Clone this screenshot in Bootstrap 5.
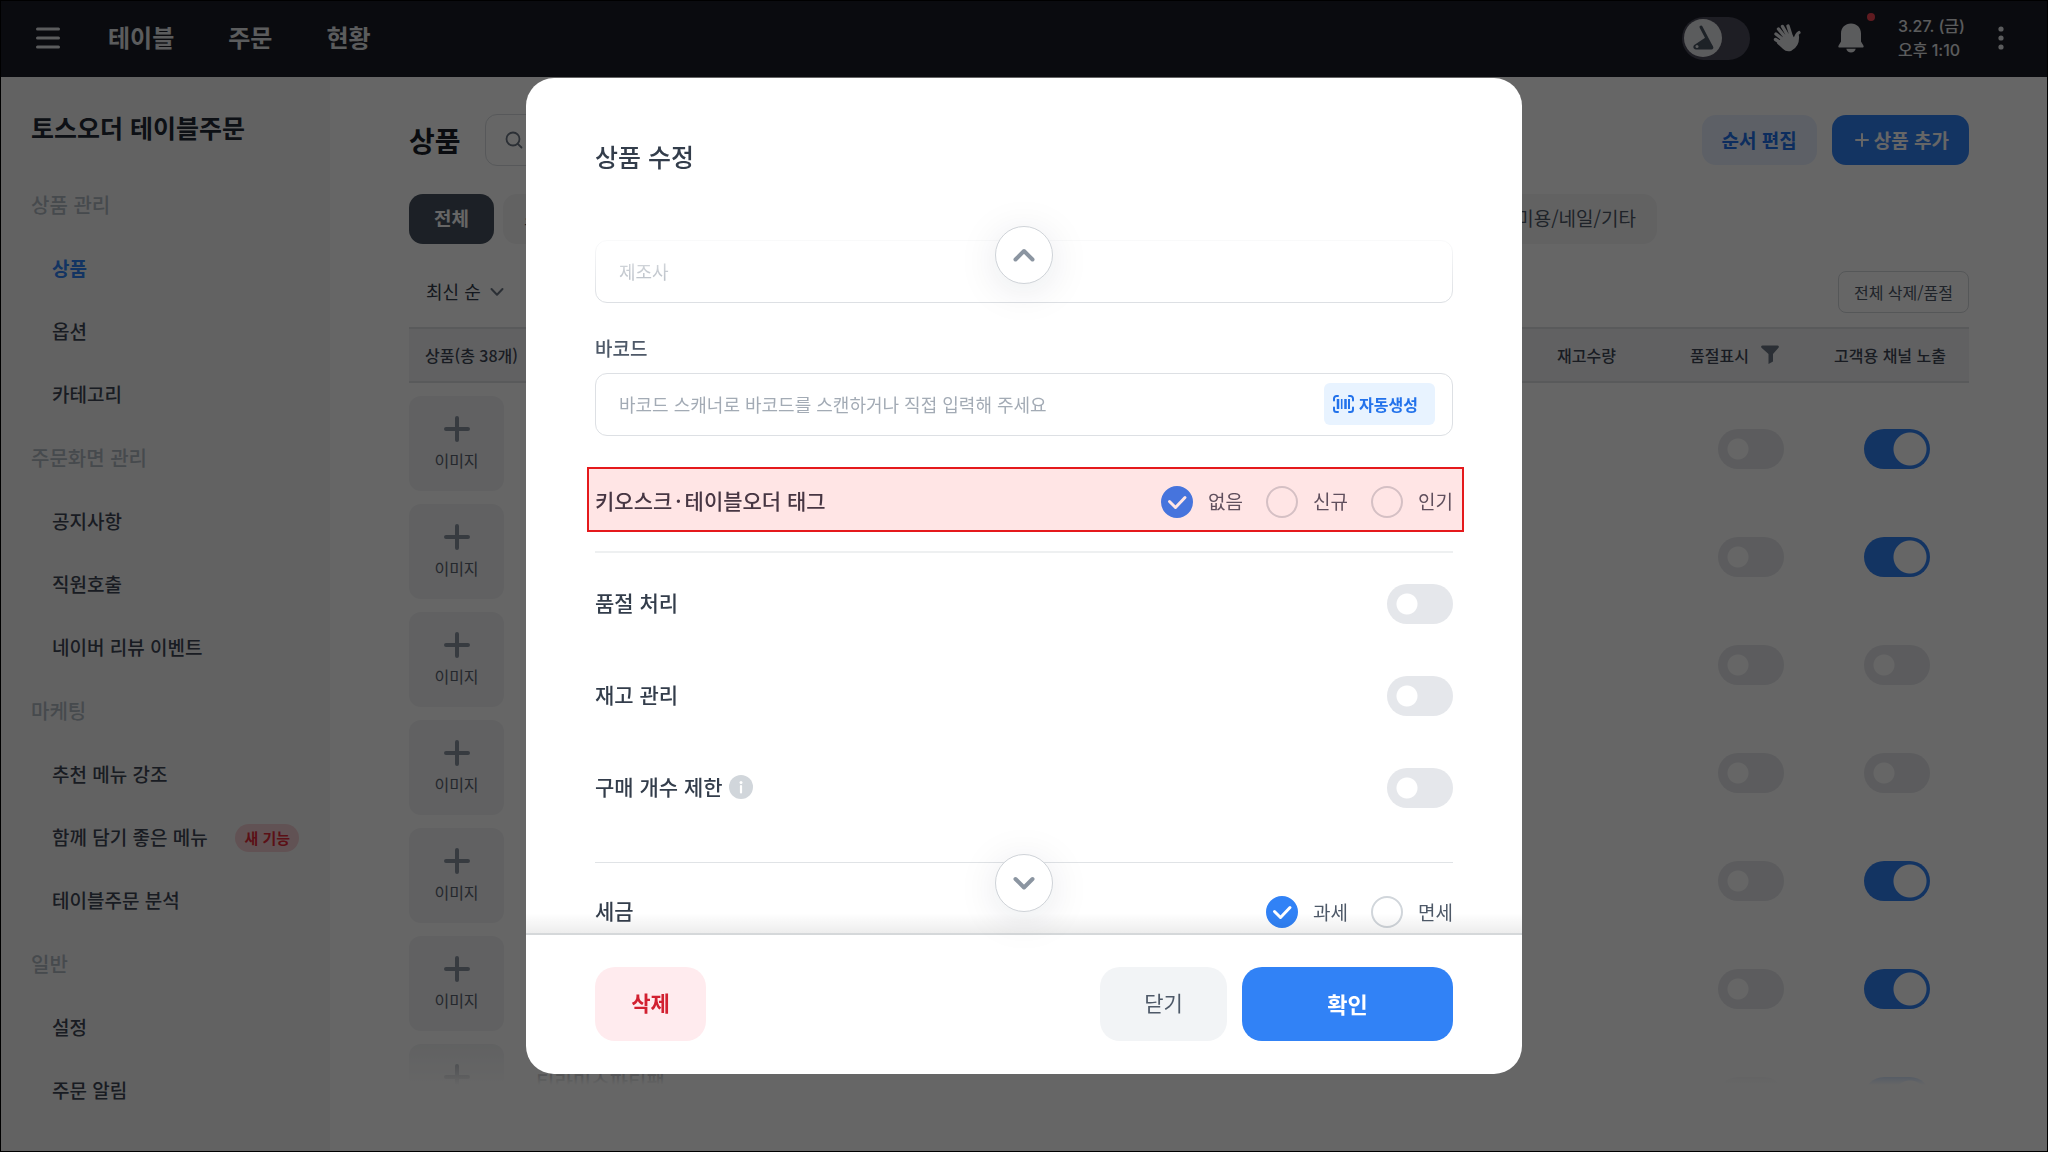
<!DOCTYPE html>
<html lang="ko">
<head>
<meta charset="utf-8">
<meta name="viewport" content="width=device-width, initial-scale=1">
<title>토스오더 테이블주문 - 상품</title>
<link href="https://cdn.jsdelivr.net/npm/bootstrap@5.3.0/dist/css/bootstrap.min.css" rel="stylesheet">
<style>
  :root { --ink: #333d4b; --ink-strong: #191f28; --ink-soft: #4e5968; --hint: #b0b8c1; --line: #e5e8eb; --blue: #3182f6; }
  body { font-family: "Noto Sans CJK KR", "Noto Sans", sans-serif; font-weight: 500; color: var(--ink); background: #000; }
  .app-page { height: 100vh; border: 1px solid #000; background: #fff; overflow: hidden; }
  button, input, select { font-family: inherit; }
  a { text-decoration: none; }

  /* top bar */
  .top-bar { height: 76px; background: #191c26; color: #e4e5e8; padding: 0 34px 2px; flex: none; }
  .top-nav { gap: 54px; margin-left: 47px; }
  .top-bar a { color: inherit; font-size: 24px; line-height: 36px; padding-bottom: 3px; font-weight: 700; }
  .icon-btn { border: 0; background: none; padding: 0; color: inherit; display: flex; position: relative; }
  .mode-track { width: 68px; height: 43px; border-radius: 22px; background: #4b4b5a; padding: 0 2px; }
  .mode-knob { width: 38px; height: 38px; border-radius: 50%; background: #e4e5e8; }
  .btn-hand { margin-left: 23px; }
  .btn-bell { margin-left: 37px; }
  .btn-more { margin-left: 24px; }
  .top-date { font-family: Inter, "Noto Sans CJK KR", sans-serif; font-size: 16px; line-height: 24px; margin-left: 34px; }
  .alert-dot { position: absolute; right: -11px; top: -10px; width: 8px; height: 8px; border-radius: 50%; background: #f04452; }

  /* side menu */
  .side-menu { width: 329px; background: #f5f5f6; padding: 31px 31px 0 30px; flex: none; }
  .side-title { font-size: 25px; line-height: 38px; font-weight: 700; color: #222a35; margin: 0 0 27px; }
  .side-head { height: 64px; font-size: 20px; color: var(--hint); margin: 0; }
  .side-menu a { height: 63px; font-size: 19px; color: #3f4856; padding-left: 21px; }
  .side-menu a.active { color: var(--blue); font-weight: 700; }
  .new-tag { font-size: 15px; line-height: 28px; padding: 0 9px; color: #e42939; background: #f3cdd1; font-weight: 700; }

  /* product list */
  .work-area { padding: 38px 78px 66px 79px; min-width: 0; }
  .work-head { height: 50px; }
  .work-title { font-size: 28px; line-height: 42px; font-weight: 700; color: var(--ink-strong); margin: 0 24px 0 0; }
  .search-box { width: 420px; height: 52px; border: 1px solid #d9dde1; border-radius: 12px; padding: 0 19px; }
  .search-box input { border: 0; background: none; font-size: 18px; outline: 0; }
  .act-btn { height: 50px; border: 0; border-radius: 14px; font-size: 19px; font-weight: 700; padding: 0 20px; }
  .act-soft { background: #e8f0ff; color: #2272eb; }
  .act-main { background: var(--blue); color: #fff; padding-left: 23px; gap: 5px; }
  .chip-row { width: 80%; margin-top: 29px; }
  .chip-btn { height: 50px; border: 0; border-radius: 14px; background: #f5f5f6; color: #4e5968; font-size: 19px; padding: 0 21px 1px; }
  .chip-btn.active { background: #46515f; color: #fff; font-weight: 700; padding: 0 25px 1px; }
  .tool-row { margin-top: 27px; }
  .sort-select { appearance: none; border: 0; background: none; color: var(--ink); font-size: 18px; width: 80px; padding: 0 24px 2px 0; margin-left: 17px; }
  .sort-box svg { margin-left: -16px; pointer-events: none; }
  .line-btn { height: 42px; border: 1px solid #d5d9dd; border-radius: 8px; background: none; color: var(--ink-soft); font-size: 16px; padding: 0 15px 1px; }
  .list-wrap { margin-top: 14px; overflow: hidden; position: relative; }
  .list-wrap::after { content: ""; position: absolute; inset: auto 0 0 0; height: 42px; background: linear-gradient(rgba(255,255,255,0), #fff); }
  .goods { width: 100%; table-layout: fixed; border-collapse: separate; border-spacing: 0; }
  .goods th { height: 56px; font-size: 16px; font-weight: 500; color: #3f4856; padding: 0 16px 1px; background: #f2f3f4; border-top: 2px solid #dfe1e3; border-bottom: 2px solid #dfe1e3; white-space: nowrap; }
  .goods th.col-channel { padding: 0 7px 1px; width: 142px; }
  .goods th.col-sold { width: 153px; }
  .goods th.col-stock { width: 133px; }
  .goods td { height: 108px; padding: 13px 0 0; }
  .goods td.cell-switch { padding-top: 23px; text-align: center; }
  .goods td.cell-channel { padding-right: 3px; }
  .add-image { width: 95px; height: 95px; border: 0; border-radius: 12px; background: #f2f3f5; color: #8b95a1; font-size: 16px; padding: 0; gap: 6px; }
  .add-image span { line-height: 24px; color: #5b6471; }
  .goods-name { font-size: 20px; line-height: 30px; margin-left: 32px; margin-bottom: 20px; }

  /* switches */
  .form-check-input.toggle { width: 66px; height: 40px; margin: 0; border: 0; border-radius: 20px; float: none; vertical-align: middle; box-shadow: none; background: radial-gradient(circle at 20px 20px, #fff 10px, transparent 11px) #e5e7eb; }
  .form-check-input.toggle:checked { background: radial-gradient(circle at 46px 20px, #fff 16px, transparent 17px) var(--blue); }

  /* dialog */
  .veil { background: rgba(0,0,0,.6); overflow: hidden; }
  .veil .modal-dialog { max-width: 996px; margin: 78px auto; height: calc(100vh - 156px); }
  .veil .modal-content { height: 100%; border: 0; border-radius: 28px; overflow: hidden; color: var(--ink); }
  .veil .modal-header { border: 0; padding: 59px 69px 35px; }
  .veil .modal-title { font-size: 25px; line-height: 38px; font-weight: 500; color: var(--ink); }
  .veil .modal-body { padding: 30px 69px 0; overflow: hidden; min-height: 0; }
  .body-frame { position: relative; min-height: 0; }
  .body-frame::before, .body-frame::after { content: ""; position: absolute; left: 0; right: 0; z-index: 1; pointer-events: none; }
  .body-frame::before { top: 0; height: 90px; background: linear-gradient(#fff 20%, rgba(255,255,255,0)); }
  .body-frame::after { bottom: 0; height: 20px; background: linear-gradient(rgba(0,0,0,0), rgba(0,0,0,.07)); }
  .field-box { height: 63px; border: 1px solid #dde0e4; border-radius: 12px; padding: 0 17px 1px 23px; }
  .field-box input { border: 0; outline: 0; background: none; font-size: 18px; font-weight: 400; color: var(--ink); padding: 0; min-width: 0; }
  .field-box input::placeholder { color: #a3abb5; opacity: 1; }
  .field-label { font-size: 19px; line-height: 28px; color: var(--ink-soft); margin: 31px 0 11px; }
  .auto-btn { height: 42px; border: 0; border-radius: 6px; background: #e8f3ff; color: #2272eb; font-size: 16px; font-weight: 700; padding: 0 17px 0 9px; gap: 5px; }
  .set-row { height: 92px; font-size: 21px; }
  .set-text { padding-bottom: 2px; gap: 6px; }
  .tag-row { height: 65px; padding-top: 4px; margin: 31px 0 19px; position: relative; font-size: 21px; }
  .tag-row::after { content: ""; position: absolute; inset: 0 -11px 0 -8px; border: 2px solid #e5191c; background: rgba(255,0,0,.1); pointer-events: none; }
  .mid-dot { margin: 0 3px; }
  .rule { border: 0; opacity: 1; height: 2px; background: #eef0f1; margin: 0 0 5px; }
  .rule-thin { height: 1px; background: #e0e3e6; margin: 28px 0 3px; }
  .pick-set { gap: 23px; }
  .pick { font-size: 19px; font-weight: 400; color: var(--ink-soft); gap: 15px; }
  .form-check-input.pick-dot { width: 32px; height: 32px; margin: 0; border: 2px solid #d1d6db; box-shadow: none; }
  .form-check-input.pick-dot:checked { border-color: var(--blue); background-color: var(--blue); background-size: 32px 32px; background-position: center;
    background-image: url("data:image/svg+xml,%3csvg xmlns='http://www.w3.org/2000/svg' viewBox='0 0 32 32'%3e%3cpath fill='none' stroke='%23fff' stroke-width='3' stroke-linecap='round' stroke-linejoin='round' d='M8.500 15.500l6 6 9.500-10'/%3e%3c/svg%3e"); }
  .jump-btn { position: absolute; left: 50%; transform: translateX(-50%); z-index: 2; width: 58px; height: 58px; border: 1px solid #cfd3d8; border-radius: 50%; background: #fff; padding: 0; box-shadow: 0 6px 40px rgba(0,27,55,.1); }
  .jump-btn svg { display: block; margin: 0 auto; }
  .jump-up { top: 16px; }
  .jump-down { bottom: 21px; }
  .veil .modal-footer { border-top: 2px solid #d5d8da; padding: 32px 69px 33px; gap: 15px; }
  .foot-btn { height: 74px; border: 0; border-radius: 20px; font-size: 21px; margin: 0; padding: 0 0 2px; }
  .foot-del { width: 111px; background: #ffebee; color: #d22030; font-weight: 700; }
  .foot-close { width: 127px; background: #f2f4f6; color: var(--ink-soft); }
  .foot-ok { width: 211px; background: var(--blue); color: #fff; font-weight: 700; font-size: 22px; }
</style>
</head>
<body>
<svg class="d-none" aria-hidden="true">
  <symbol id="plus" viewBox="0 0 26 26"><path d="M13 2v22M2 13h22" stroke="currentColor" stroke-width="4" stroke-linecap="round"/></symbol>
</svg>

<div class="app-page d-flex flex-column">
  <header class="top-bar d-flex align-items-center">
    <button class="icon-btn" type="button" aria-label="메뉴">
      <svg width="26" height="26" viewBox="0 0 26 26"><path d="M2.500 4h21M2.500 13h21M2.500 22h21" stroke="currentColor" stroke-width="3" stroke-linecap="round"/></svg>
    </button>
    <nav class="top-nav d-flex">
      <a href="#">테이블</a><a href="#">주문</a><a href="#">현황</a>
    </nav>
    <div class="ms-auto d-flex align-items-center">
      <button class="icon-btn mode-track align-items-center" type="button" aria-label="단말기 모드">
        <span class="mode-knob"><svg width="38" height="38" viewBox="0 0 38 38"><path d="M17 8 27.500 28" stroke="#4a5563" stroke-width="3" stroke-linecap="round"/><path d="M21.500 18.500 29 27.500c1 1.500 0 3-1.500 3H12c-3 0-3.500-4-1-5z" fill="#4a5563"/><circle cx="13" cy="27.500" r="1.500" fill="#e4e5e8"/></svg></span>
      </button>
      <button class="icon-btn btn-hand" type="button" aria-label="직원호출">
        <svg width="28" height="30" viewBox="0 0 28 30" fill="none" stroke="currentColor" stroke-linecap="round" stroke-linejoin="round"><path d="M9.500 16 3 11M12 14 5.500 6M15 13 9.500 3.500M18.500 14 15 3M8 20 2.500 16.500" stroke-width="3.400"/><path d="M22 16c1-3 1.500-5 4-6.500" stroke-width="3.200"/><path d="M9 16l9-4 3 4c2 .5 3-1 4-3 .5 6-2 11-6.500 13.500-3 1.500-6 .5-8-1.500L5 20z" fill="currentColor" stroke-width="2"/></svg>
      </button>
      <button class="icon-btn btn-bell" type="button" aria-label="알림">
        <svg width="26" height="30" viewBox="0 0 26 30" fill="currentColor"><path d="M13 .5c5.800 0 10 4.200 10 10v8l2.500 4.200c.5 1-.1 1.800-1 1.800H1.500c-.9 0-1.500-.8-1-1.800L3 18.500v-8C3 4.700 7.200.500 13 .500zM8.300 25.800h9.400c-.4 2.400-2.300 3.700-4.700 3.700s-4.300-1.300-4.700-3.700z"/></svg>
        <span class="alert-dot"></span>
      </button>
      <div class="top-date"><div>3.27. (금)</div><div>오후 1:10</div></div>
      <button class="icon-btn btn-more" type="button" aria-label="더보기">
        <svg width="24" height="26" viewBox="0 0 24 26" fill="currentColor"><circle cx="12" cy="4" r="2.600"/><circle cx="12" cy="13" r="2.600"/><circle cx="12" cy="22" r="2.600"/></svg>
      </button>
    </div>
  </header>

  <div class="d-flex flex-grow-1 overflow-hidden">
    <aside class="side-menu">
      <h2 class="side-title">토스오더 테이블주문</h2>
      <nav>
        <h3 class="side-head d-flex align-items-center">상품 관리</h3>
        <a href="#" class="active d-flex align-items-center">상품</a>
        <a href="#" class="d-flex align-items-center">옵션</a>
        <a href="#" class="d-flex align-items-center">카테고리</a>
        <h3 class="side-head d-flex align-items-center">주문화면 관리</h3>
        <a href="#" class="d-flex align-items-center">공지사항</a>
        <a href="#" class="d-flex align-items-center">직원호출</a>
        <a href="#" class="d-flex align-items-center">네이버 리뷰 이벤트</a>
        <h3 class="side-head d-flex align-items-center">마케팅</h3>
        <a href="#" class="d-flex align-items-center">추천 메뉴 강조</a>
        <a href="#" class="d-flex align-items-center justify-content-between">함께 담기 좋은 메뉴 <span class="new-tag rounded-pill">새 기능</span></a>
        <a href="#" class="d-flex align-items-center">테이블주문 분석</a>
        <h3 class="side-head d-flex align-items-center">일반</h3>
        <a href="#" class="d-flex align-items-center">설정</a>
        <a href="#" class="d-flex align-items-center">주문 알림</a>
      </nav>
    </aside>

    <main class="work-area flex-grow-1 d-flex flex-column">
      <div class="work-head d-flex align-items-center">
        <h1 class="work-title">상품</h1>
        <label class="search-box d-flex align-items-center gap-2">
          <svg width="18" height="18" viewBox="0 0 18 18" fill="none" stroke="#6b7684" stroke-width="1.800" stroke-linecap="round"><circle cx="8" cy="8" r="6.500"/><path d="M12.800 12.800 16.500 16.500"/></svg>
          <span class="visually-hidden">상품 검색</span><input type="search" class="flex-grow-1">
        </label>
        <div class="ms-auto d-flex" style="gap:15px">
          <button type="button" class="act-btn act-soft">순서 편집</button>
          <button type="button" class="act-btn act-main d-flex align-items-center"><svg width="14" height="14" viewBox="0 0 14 14"><path d="M7 1v12M1 7h12" stroke="currentColor" stroke-width="2" stroke-linecap="round"/></svg>상품 추가</button>
        </div>
      </div>

      <div class="chip-row d-flex justify-content-between">
        <div class="d-flex" style="gap:9px">
          <button type="button" class="chip-btn active">전체</button>
          <button type="button" class="chip-btn">스타일링</button>
        </div>
        <button type="button" class="chip-btn">미용/네일/기타</button>
      </div>

      <div class="tool-row d-flex align-items-center justify-content-between">
        <label class="sort-box d-flex align-items-center">
          <span class="visually-hidden">정렬</span>
          <select class="sort-select"><option>최신 순</option></select>
          <svg width="14" height="10" viewBox="0 0 14 10"><path d="M1.500 2 7 7.800 12.500 2" fill="none" stroke="#6b7684" stroke-width="2" stroke-linecap="round" stroke-linejoin="round"/></svg>
        </label>
        <button type="button" class="line-btn">전체 삭제/품절</button>
      </div>

      <div class="list-wrap flex-grow-1">
        <table class="goods">
          <thead>
            <tr>
              <th scope="col">상품(총 38개)</th>
              <th scope="col" class="col-stock">재고수량</th>
              <th scope="col" class="col-sold"><span class="d-flex align-items-center">품절표시<svg class="ms-2" width="26" height="20" viewBox="0 0 26 20"><path d="M5.500.500h15c1.300 0 1.800 1.300 1 2.300L16 9v7.500L11.500 19V9L4.500 2.800c-.8-1-.3-2.300 1-2.300z" fill="#6b7684"/></svg></span></th>
              <th scope="col" class="col-channel">고객용 채널 노출</th>
            </tr>
          </thead>
          <tbody>
            <tr>
              <td><button type="button" class="add-image d-flex flex-column align-items-center justify-content-center"><svg width="26" height="26"><use href="#plus"/></svg><span>이미지</span></button></td><td></td>
              <td class="cell-switch"><input type="checkbox" role="switch" class="form-check-input toggle" aria-label="품절표시"></td>
              <td class="cell-switch cell-channel"><input type="checkbox" role="switch" class="form-check-input toggle" aria-label="고객용 채널 노출" checked></td>
            </tr>
            <tr>
              <td><button type="button" class="add-image d-flex flex-column align-items-center justify-content-center"><svg width="26" height="26"><use href="#plus"/></svg><span>이미지</span></button></td><td></td>
              <td class="cell-switch"><input type="checkbox" role="switch" class="form-check-input toggle" aria-label="품절표시"></td>
              <td class="cell-switch cell-channel"><input type="checkbox" role="switch" class="form-check-input toggle" aria-label="고객용 채널 노출" checked></td>
            </tr>
            <tr>
              <td><button type="button" class="add-image d-flex flex-column align-items-center justify-content-center"><svg width="26" height="26"><use href="#plus"/></svg><span>이미지</span></button></td><td></td>
              <td class="cell-switch"><input type="checkbox" role="switch" class="form-check-input toggle" aria-label="품절표시"></td>
              <td class="cell-switch cell-channel"><input type="checkbox" role="switch" class="form-check-input toggle" aria-label="고객용 채널 노출"></td>
            </tr>
            <tr>
              <td><button type="button" class="add-image d-flex flex-column align-items-center justify-content-center"><svg width="26" height="26"><use href="#plus"/></svg><span>이미지</span></button></td><td></td>
              <td class="cell-switch"><input type="checkbox" role="switch" class="form-check-input toggle" aria-label="품절표시"></td>
              <td class="cell-switch cell-channel"><input type="checkbox" role="switch" class="form-check-input toggle" aria-label="고객용 채널 노출"></td>
            </tr>
            <tr>
              <td><button type="button" class="add-image d-flex flex-column align-items-center justify-content-center"><svg width="26" height="26"><use href="#plus"/></svg><span>이미지</span></button></td><td></td>
              <td class="cell-switch"><input type="checkbox" role="switch" class="form-check-input toggle" aria-label="품절표시"></td>
              <td class="cell-switch cell-channel"><input type="checkbox" role="switch" class="form-check-input toggle" aria-label="고객용 채널 노출" checked></td>
            </tr>
            <tr>
              <td><button type="button" class="add-image d-flex flex-column align-items-center justify-content-center"><svg width="26" height="26"><use href="#plus"/></svg><span>이미지</span></button></td><td></td>
              <td class="cell-switch"><input type="checkbox" role="switch" class="form-check-input toggle" aria-label="품절표시"></td>
              <td class="cell-switch cell-channel"><input type="checkbox" role="switch" class="form-check-input toggle" aria-label="고객용 채널 노출" checked></td>
            </tr>
            <tr>
              <td><div class="d-flex align-items-center"><button type="button" class="add-image d-flex flex-column align-items-center justify-content-center"><svg width="26" height="26"><use href="#plus"/></svg><span>이미지</span></button><span class="goods-name">티라미스파티팩</span></div></td><td></td>
              <td class="cell-switch"><input type="checkbox" role="switch" class="form-check-input toggle" aria-label="품절표시"></td>
              <td class="cell-switch cell-channel"><input type="checkbox" role="switch" class="form-check-input toggle" aria-label="고객용 채널 노출" checked></td>
            </tr>
          </tbody>
        </table>
      </div>
    </main>
  </div>
</div>

<div class="modal veil d-block" tabindex="-1" role="dialog" aria-modal="true" aria-labelledby="dlgTitle">
  <div class="modal-dialog">
    <form class="modal-content">
      <div class="modal-header"><h2 class="modal-title" id="dlgTitle">상품 수정</h2></div>
      <div class="body-frame flex-grow-1 d-flex flex-column">
        <button type="button" class="jump-btn jump-up" aria-label="위로"><svg width="26" height="18" viewBox="0 0 26 18"><path d="M4.500 13.500 13 5l8.500 8.500" fill="none" stroke="#8b95a1" stroke-width="4" stroke-linecap="round" stroke-linejoin="round"/></svg></button>
        <div class="modal-body">
          <div class="field-box d-flex align-items-center"><input type="text" class="flex-grow-1" placeholder="제조사" aria-label="제조사"></div>
          <label class="field-label d-block" for="barcode">바코드</label>
          <div class="field-box d-flex align-items-center">
            <input type="text" id="barcode" class="flex-grow-1" placeholder="바코드 스캐너로 바코드를 스캔하거나 직접 입력해 주세요">
            <button type="button" class="auto-btn d-flex align-items-center">
              <svg width="21" height="18" viewBox="0 0 21 18" fill="none" stroke="currentColor"><path d="M1 5.500V3.500a2.500 2.500 0 0 1 2.500-2.500H5M16 1h1.500A2.500 2.500 0 0 1 20 3.500v2M20 12.500v2a2.500 2.500 0 0 1-2.500 2.500H16M5 17H3.500A2.500 2.500 0 0 1 1 14.500v-2" stroke-width="2" stroke-linecap="round"/><path d="M5 4v10M12.500 4v10" stroke-width="2.500"/><path d="M8.700 4v10" stroke-width="1.600"/><path d="M16 4v10" stroke-width="2"/></svg>
              자동생성</button>
          </div>

          <div class="tag-row d-flex align-items-center justify-content-between" role="radiogroup" aria-label="키오스크·테이블오더 태그">
            <span class="set-text">키오스크<span class="mid-dot">·</span>테이블오더 태그</span>
            <div class="pick-set d-flex">
              <label class="pick d-flex align-items-center"><input type="radio" name="tag" class="form-check-input pick-dot" checked>없음</label>
              <label class="pick d-flex align-items-center"><input type="radio" name="tag" class="form-check-input pick-dot">신규</label>
              <label class="pick d-flex align-items-center"><input type="radio" name="tag" class="form-check-input pick-dot">인기</label>
            </div>
          </div>
          <hr class="rule">
          <div class="set-row d-flex align-items-center justify-content-between"><label class="set-text" for="soldOut">품절 처리</label><input type="checkbox" role="switch" id="soldOut" class="form-check-input toggle"></div>
          <div class="set-row d-flex align-items-center justify-content-between"><label class="set-text" for="stock">재고 관리</label><input type="checkbox" role="switch" id="stock" class="form-check-input toggle"></div>
          <div class="set-row d-flex align-items-center justify-content-between">
            <div class="set-text d-flex align-items-center"><label for="limit">구매 개수 제한</label>
              <svg width="24" height="24" viewBox="0 0 24 24"><circle cx="12" cy="12" r="12" fill="#d1d6db"/><circle cx="12" cy="7.500" r="1.500" fill="#fff"/><path d="M12 11v6.500" stroke="#fff" stroke-width="2.200" stroke-linecap="round"/></svg></div>
            <input type="checkbox" role="switch" id="limit" class="form-check-input toggle">
          </div>
          <hr class="rule rule-thin">
          <div class="set-row d-flex align-items-center justify-content-between" role="radiogroup" aria-label="세금">
            <span class="set-text">세금</span>
            <div class="pick-set d-flex">
              <label class="pick d-flex align-items-center"><input type="radio" name="tax" class="form-check-input pick-dot" checked>과세</label>
              <label class="pick d-flex align-items-center"><input type="radio" name="tax" class="form-check-input pick-dot">면세</label>
            </div>
          </div>
        </div>
        <button type="button" class="jump-btn jump-down" aria-label="아래로"><svg width="26" height="18" viewBox="0 0 26 18"><path d="M4.500 5 13 13.500 21.500 5" fill="none" stroke="#8b95a1" stroke-width="4" stroke-linecap="round" stroke-linejoin="round"/></svg></button>
      </div>
      <div class="modal-footer">
        <button type="button" class="foot-btn foot-del me-auto">삭제</button>
        <button type="button" class="foot-btn foot-close">닫기</button>
        <button type="submit" class="foot-btn foot-ok">확인</button>
      </div>
    </form>
  </div>
</div>
<script src="https://cdn.jsdelivr.net/npm/bootstrap@5.3.0/dist/js/bootstrap.bundle.min.js"></script>
</body>
</html>
